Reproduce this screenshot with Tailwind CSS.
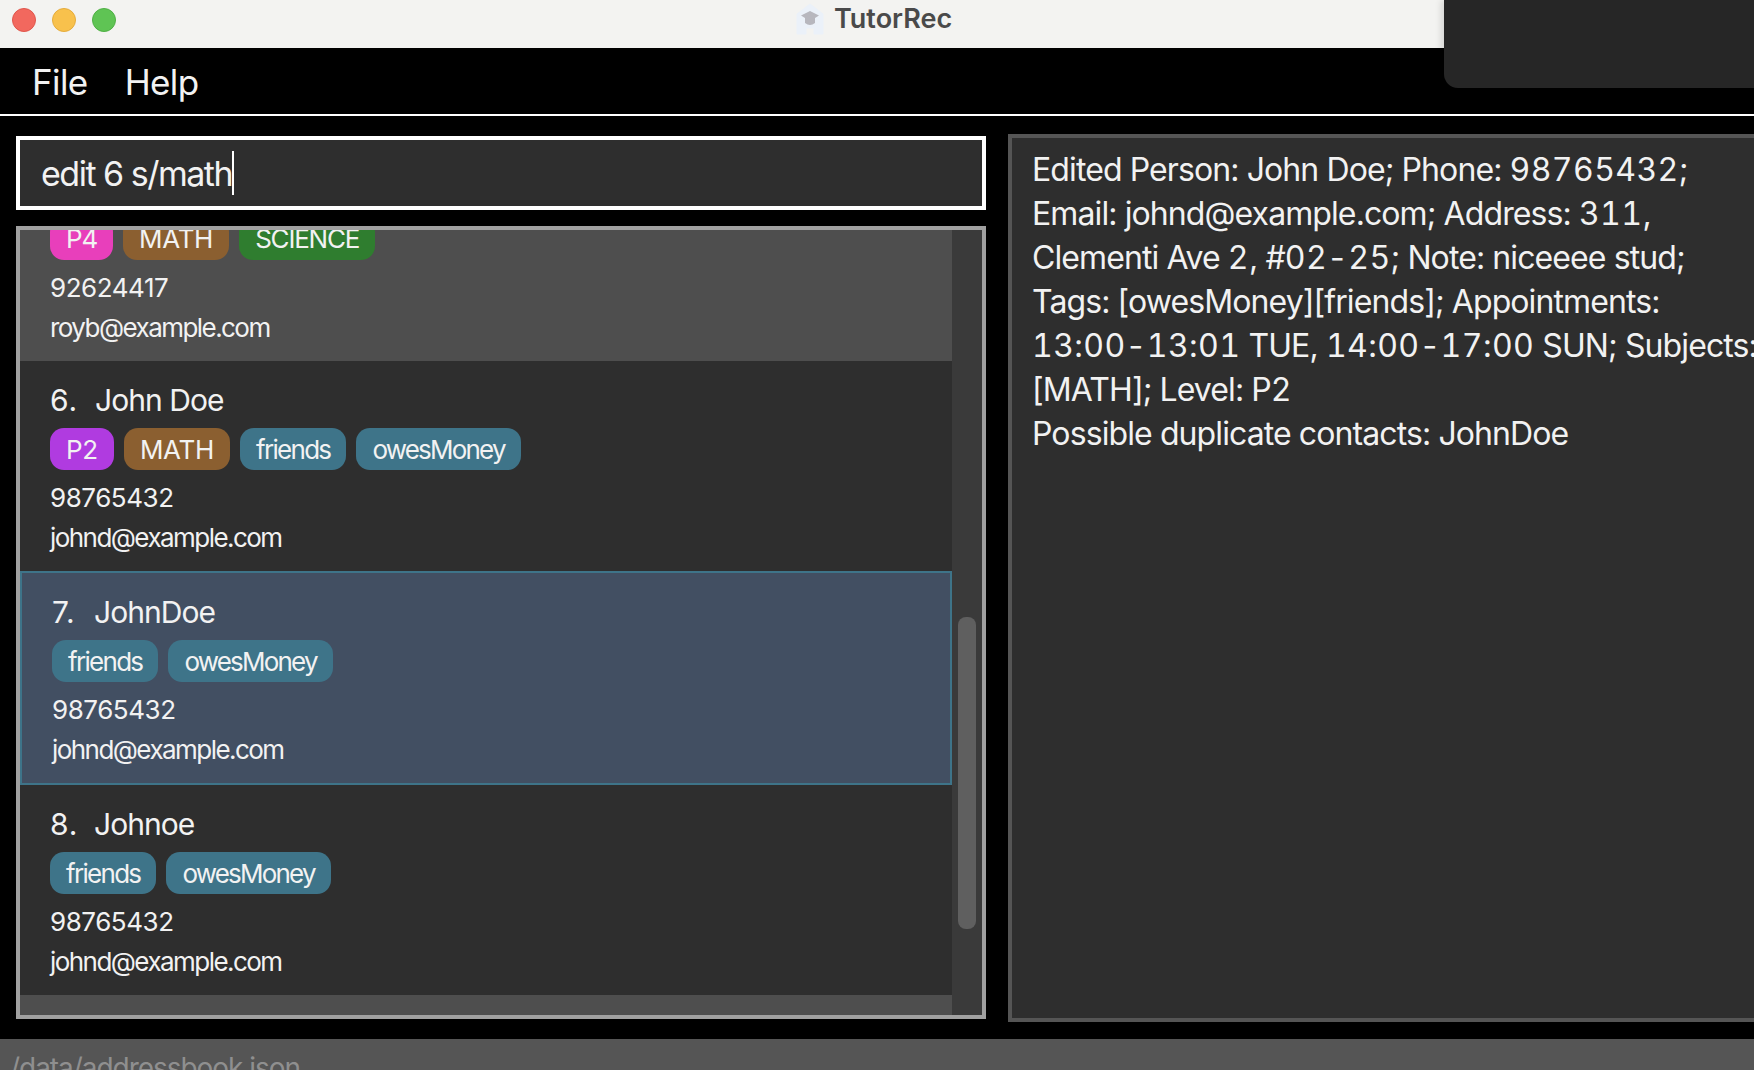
<!DOCTYPE html>
<html>
<head>
<meta charset="utf-8">
<script src="https://cdn.jsdelivr.net/npm/@tailwindcss/browser@4"></script>
</head>
<body class="bg-black">
<div class="relative flex flex-col w-[1754px] h-[1070px] overflow-hidden bg-black font-['Inter',sans-serif] text-[#f2f2f2]">
  <!-- title bar -->
  <div class="relative flex items-center justify-center h-[48px] bg-[#f3f3f1] shrink-0">
    <div class="absolute left-[12px] top-[8px] flex gap-[16px]">
      <span class="w-[24px] h-[24px] rounded-full bg-[#f2685e] border border-[#e0564c]"></span>
      <span class="w-[24px] h-[24px] rounded-full bg-[#f8c14c] border border-[#e5ac3c]"></span>
      <span class="w-[24px] h-[24px] rounded-full bg-[#5fc454] border border-[#4fb045]"></span>
    </div>
    <div class="absolute left-[796px] top-[3px] flex items-center gap-[10px]">
      <svg width="28" height="32" viewBox="0 0 28 32"><path d="M14 1 L27 11 V31 H18 V25 H10 V31 H1 V11 Z" fill="#ebf1f9" stroke="#ebf1f9" stroke-linejoin="round"/><path d="M14 8 L23 12.5 L19 15 V20 Q14 24 9 20 V15 L5 12.5 Z" fill="#b7b7be"/></svg>
      <span class="text-[27px] leading-[32px] font-semibold text-[#4a4a4a]">TutorRec</span>
    </div>
  </div>
  <!-- menu -->
  <div class="flex items-center gap-[37px] h-[66px] pl-[32px] pt-[2px] text-[35px] tracking-[-0.6px] shrink-0">
    <span>File</span><span>Help</span>
  </div>
  <div class="h-[2px] bg-white shrink-0"></div>
  <!-- main -->
  <div class="flex-1 min-h-0 flex pl-[16px] pr-[20px] gap-[22px]">
    <div class="w-[970px] shrink-0 flex flex-col pt-[20px]">
      <div class="relative h-[74px] border-[4px] border-white bg-[#2e2e2e] flex items-center pl-[21px] text-[34px] tracking-[-1.5px]">
        <span>edit 6 s/math</span><span class="w-[2px] h-[44px] bg-white"></span>
      </div>
      <div class="mt-[16px] h-[793px] border-[4px] border-[#a0a0a0] flex overflow-hidden">
        <div class="w-[932px] overflow-hidden text-[26px] tracking-[-1.55px]">
          <div class="-mt-[79px] h-[210px] px-[30px] pt-[20px] bg-[#4e4e4e]">
            <div class="h-[38px]"></div>
            <div class="mt-[9px] flex gap-[10px] h-[42px]">
              <span class="h-[42px] leading-[41px] px-[16px] rounded-[14px] bg-[#e83fbb] tracking-[-1.2px]">P4</span>
              <span class="h-[42px] leading-[41px] px-[16px] rounded-[14px] bg-[#8b5f30] tracking-[-0.3px]">MATH</span>
              <span class="h-[42px] leading-[41px] px-[16px] rounded-[14px] bg-[#2f7d2f] tracking-[-1.2px]">SCIENCE</span>
            </div>
            <div class="mt-[8px] h-[38px] leading-[40px] tracking-[-0.45px]">92624417</div>
            <div class="mt-[3px] h-[38px] leading-[38px]">royb@example.com</div>
          </div>
          <div class="h-[210px] px-[30px] pt-[20px] bg-[#2e2e2e]">
            <div class="h-[38px] leading-[38px] text-[30px] tracking-[-0.95px]"><span class="inline-block w-[45px] tracking-[0.8px]">6.</span>John Doe</div>
            <div class="mt-[9px] flex gap-[10px] h-[42px]">
              <span class="h-[42px] leading-[44px] px-[16px] rounded-[14px] bg-[#b03be0] tracking-[-0.3px]">P2</span>
              <span class="h-[42px] leading-[44px] px-[16px] rounded-[14px] bg-[#8b5f30] tracking-[-0.3px]">MATH</span>
              <span class="h-[42px] leading-[44px] px-[16px] rounded-[14px] bg-[#3e7489] tracking-[-1.7px]">friends</span>
              <span class="h-[42px] leading-[44px] px-[16px] rounded-[14px] bg-[#3e7489] tracking-[-1.8px]">owesMoney</span>
            </div>
            <div class="mt-[8px] h-[38px] leading-[40px] tracking-[-0.45px]">98765432</div>
            <div class="mt-[3px] h-[38px] leading-[38px]">johnd@example.com</div>
          </div>
          <div class="h-[214px] px-[30px] pt-[20px] border-[2px] border-[#3e7489] bg-[#424f62]">
            <div class="h-[38px] leading-[38px] text-[30px] tracking-[-0.95px]"><span class="inline-block w-[42px] tracking-[0.8px]">7.</span>JohnDoe</div>
            <div class="mt-[9px] flex gap-[10px] h-[42px]">
              <span class="h-[42px] leading-[44px] px-[16px] rounded-[14px] bg-[#3e7489] tracking-[-1.7px]">friends</span>
              <span class="h-[42px] leading-[44px] px-[16px] rounded-[14px] bg-[#3e7489] tracking-[-1.8px]">owesMoney</span>
            </div>
            <div class="mt-[8px] h-[38px] leading-[40px] tracking-[-0.45px]">98765432</div>
            <div class="mt-[3px] h-[38px] leading-[38px]">johnd@example.com</div>
          </div>
          <div class="h-[210px] px-[30px] pt-[20px] bg-[#2e2e2e]">
            <div class="h-[38px] leading-[38px] text-[30px] tracking-[-0.95px]"><span class="inline-block w-[44px] tracking-[0.8px]">8.</span>Johnoe</div>
            <div class="mt-[9px] flex gap-[10px] h-[42px]">
              <span class="h-[42px] leading-[44px] px-[16px] rounded-[14px] bg-[#3e7489] tracking-[-1.7px]">friends</span>
              <span class="h-[42px] leading-[44px] px-[16px] rounded-[14px] bg-[#3e7489] tracking-[-1.8px]">owesMoney</span>
            </div>
            <div class="mt-[8px] h-[38px] leading-[40px] tracking-[-0.45px]">98765432</div>
            <div class="mt-[3px] h-[38px] leading-[38px]">johnd@example.com</div>
          </div>
          <div class="h-[40px] bg-[#4e4e4e]"></div>
        </div>
        <div class="flex-1 bg-[#3a3a3a] pt-[387px] px-[6px]">
          <div class="h-[312px] rounded-[8px] bg-[#5f5f5f]"></div>
        </div>
      </div>
    </div>
    <div class="flex-1 mt-[18px] h-[888px] border-[4px] border-[#555555] bg-[#2e2e2e] pl-[20px] pt-[10px] text-[32px] leading-[44px] tracking-[-0.9px] whitespace-nowrap">
      Edited Person: John Doe; Phone: <span class="tabular-nums tracking-[0.4px]">98765432</span>;<br>
      Email: johnd@example.com; Address: <span class="tabular-nums tracking-[0.4px]">311</span>,<br>
      Clementi Ave <span class="tabular-nums tracking-[0.4px]">2</span>, #<span class="tabular-nums tracking-[0.4px]">02-25</span>; Note: niceeee stud;<br>
      Tags: [owesMoney][friends]; Appointments:<br>
      <span class="tabular-nums tracking-[0.4px]">13:00-13:01</span> TUE, <span class="tabular-nums tracking-[0.4px]">14:00-17:00</span> SUN; Subjects:<br>
      [MATH]; Level: P<span class="tabular-nums">2</span><br>
      Possible duplicate contacts: JohnDoe
    </div>
  </div>
  <!-- status -->
  <div class="h-[31px] bg-[#555555] shrink-0 overflow-hidden pl-[10px] pt-[11px] text-[28px] leading-[36px] text-[#8f8f8f] tracking-[-1.05px]">/data/addressbook.json</div>
  <!-- notch overlay -->
  <div class="absolute right-0 top-0 w-[310px] h-[88px] bg-[#262626] rounded-bl-[14px] shadow-[-3px_0_6px_rgba(0,0,0,0.12)]"></div>
</div>
</body>
</html>
